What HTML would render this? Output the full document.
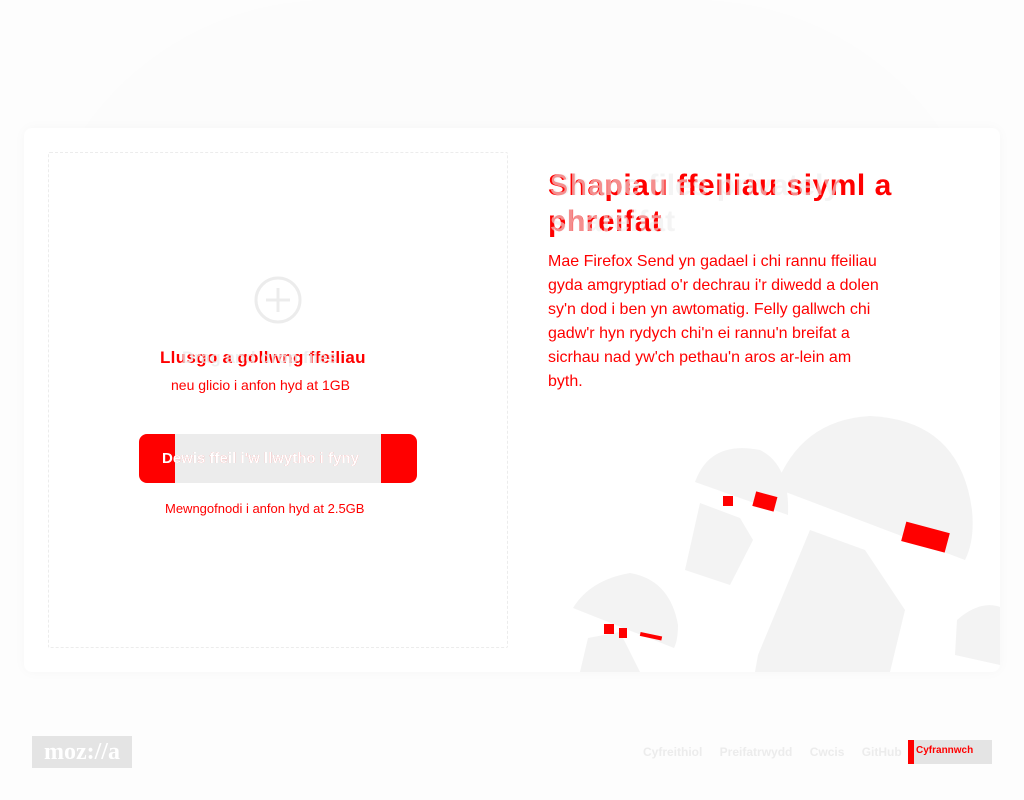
<!DOCTYPE html>
<html><head><meta charset="utf-8"><style>
*{margin:0;padding:0;box-sizing:border-box}
body{width:1024px;height:800px;background:#fdfdfd;font-family:"Liberation Sans",sans-serif;position:relative;overflow:hidden}
.a{position:absolute;white-space:nowrap}
.card{position:absolute;left:24px;top:128px;width:976px;height:544px;background:#fff;border-radius:8px;box-shadow:0 0 12px rgba(0,0,0,0.03)}
.drop{position:absolute;left:48px;top:152px;width:460px;height:496px;border:1px dashed #ececec;border-radius:2px}
.r{color:#f00}
.g{color:#ececec}
</style></head><body>
<div class="a" style="left:30px;top:0;width:964px;height:300px;background:#fcfcfc;border-radius:400px 400px 0 0"></div>
<div class="card"></div>
<div class="drop"></div>
<svg class="a" style="left:254px;top:276px" width="48" height="48"><circle cx="24" cy="24" r="22" fill="none" stroke="#ececec" stroke-width="3"/><path d="M24 12v24M12 24h24" stroke="#ececec" stroke-width="3"/></svg>
<div class="a r" style="left:160px;top:348px;font-size:17px;font-weight:bold;letter-spacing:0.3px">Llusgo a gollwng ffeiliau</div>
<div class="a g" style="left:182px;top:348px;font-size:17px;font-weight:bold;opacity:.8">Drag and drop files</div>
<div class="a r" style="left:171px;top:377px;font-size:14px">neu glicio i anfon hyd at 1GB</div>
<div class="a" style="left:139px;top:434px;width:278px;height:49px;background:#f00;border-radius:8px"></div>
<div class="a" style="left:175px;top:434px;width:206px;height:49px;background:#ececec"></div>
<div class="a" style="left:162px;top:450px;font-size:15px;font-weight:bold;color:#fff;text-shadow:0 0 0 #f00">Dewis ffeil i'w llwytho i fyny</div>
<div class="a r" style="left:165px;top:501px;font-size:13px">Mewngofnodi i anfon hyd at 2.5GB</div>
<div class="a r" style="left:548px;top:168px;font-size:30px;font-weight:bold;line-height:36px;letter-spacing:0.5px">Shapiau ffeiliau siyml a<br>phreifat</div>
<div class="a" style="left:550px;top:168px;font-size:30px;font-weight:bold;line-height:36px;color:rgba(236,236,236,.6)">Shane files privately<br>shareifat</div>
<div class="a r" style="left:548px;top:250px;font-size:16px;line-height:24px;white-space:normal;width:336px">Mae Firefox Send yn gadael i chi rannu ffeiliau gyda amgryptiad o'r dechrau i'r diwedd a dolen sy'n dod i ben yn awtomatig. Felly gallwch chi gadw'r hyn rydych chi'n ei rannu'n breifat a sicrhau nad yw'ch pethau'n aros ar-lein am byth.</div>
<svg class="a" style="left:540px;top:400px" width="460" height="272">
<g fill="#f3f3f3">
<path d="M155 82 Q170 40 220 50 Q250 65 248 115 Z"/>
<path d="M235 88 Q260 20 330 16 Q420 20 432 110 Q435 140 425 160 Z"/>
<path d="M33 208 Q50 180 90 173 Q130 180 138 225 Q138 240 134 248 Z"/>
<path d="M160 103 L200 118 L213 140 L190 185 L145 170 Z"/>
<path d="M270 130 L325 150 L365 210 L350 272 L215 272 L218 255 Z"/>
<path d="M48 238 L80 232 L100 272 L40 272Z"/>
<path d="M417 220 Q440 200 460 207 L460 265 L415 255Z"/>
</g>
<g fill="#f00"><rect x="183" y="96" width="10" height="10"/><rect x="214" y="94" width="22" height="15" transform="rotate(15 225 101)"/><rect x="363" y="127" width="45" height="20" transform="rotate(15 385 137)"/><rect x="64" y="224" width="10" height="10"/><rect x="79" y="228" width="8" height="10"/><rect x="100" y="234" width="22" height="4" transform="rotate(12 110 236)"/></g>
</svg>
<div class="a" style="left:32px;top:736px;width:100px;height:32px;background:#e4e4e4;color:#fff;font-family:'Liberation Serif',serif;font-weight:bold;font-size:24px;line-height:32px;text-align:center">moz://a</div>
<div class="a" style="left:643px;top:745px;font-size:12px;font-weight:bold;color:#ececec;word-spacing:14px">Cyfreithiol Preifatrwydd Cwcis GitHub</div>
<div class="a" style="left:908px;top:740px;width:6px;height:24px;background:#f00"></div>
<div class="a" style="left:914px;top:740px;width:78px;height:24px;background:#e4e4e4"></div>
<div class="a r" style="left:916px;top:745px;font-size:10px;font-weight:bold">Cyfrannwch</div>
</body></html>
